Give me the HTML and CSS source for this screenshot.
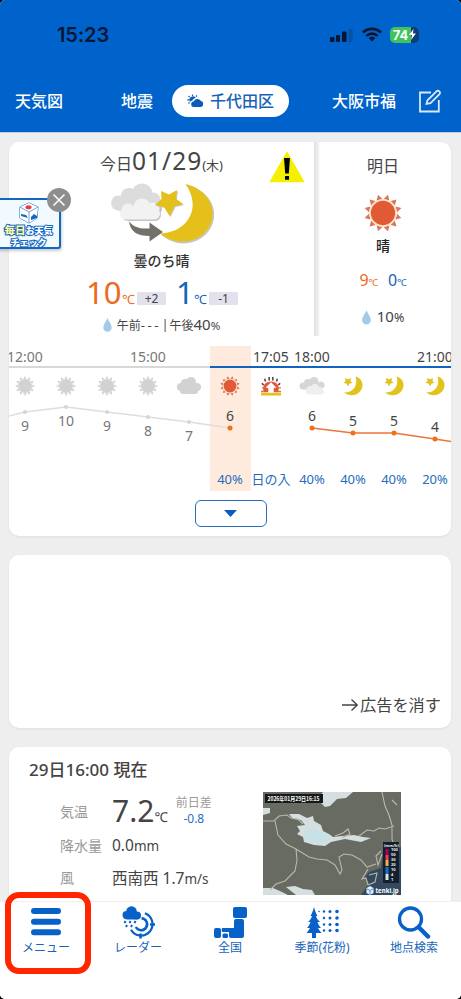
FILE: index.html
```html
<!DOCTYPE html>
<html lang="ja">
<head>
<meta charset="utf-8">
<title>千代田区の天気</title>
<link rel="stylesheet" href="styles.css">
</head>
<body>
<svg class="defs" width="0" height="0">
  <defs>
    <g id="rays">
      <path id="ray" d="M-3.2-14.5 0-20 3.2-14.5Z"/>
      <use href="#ray" transform="rotate(30)"/><use href="#ray" transform="rotate(60)"/><use href="#ray" transform="rotate(90)"/><use href="#ray" transform="rotate(120)"/><use href="#ray" transform="rotate(150)"/><use href="#ray" transform="rotate(180)"/><use href="#ray" transform="rotate(210)"/><use href="#ray" transform="rotate(240)"/><use href="#ray" transform="rotate(270)"/><use href="#ray" transform="rotate(300)"/><use href="#ray" transform="rotate(330)"/>
    </g>
    <symbol id="sun" viewBox="-20 -20 40 40"><g transform="rotate(15)"><use href="#rays" fill="#d8765f"/></g><circle r="14.500" fill="#fbe3c4"/><circle r="12.800" fill="#e05a35"/></symbol>
    <symbol id="sun-past" viewBox="-20 -20 40 40"><use href="#rays" fill="#d2d2d2"/><circle r="14" fill="#d2d2d2"/></symbol>
    <symbol id="cloud-past" viewBox="0 0 26 20"><g fill="#d2d2d2"><circle cx="5" cy="11" r="4"/><circle cx="9" cy="7" r="4"/><circle cx="15" cy="6" r="5"/><circle cx="21" cy="11" r="4"/><rect x="4" y="9" width="18" height="9" rx="3"/></g></symbol>
    <symbol id="cloud" viewBox="0 0 26 20"><g fill="#d6d6d6"><circle cx="4" cy="10" r="3.500"/><circle cx="9" cy="7" r="4"/><circle cx="15" cy="5.500" r="4.500"/><circle cx="22" cy="9" r="3.500"/><rect x="3" y="8" width="21" height="5.500" rx="2"/></g><g fill="#efefef"><circle cx="11" cy="13.500" r="3.500"/><circle cx="16" cy="12" r="4"/><circle cx="21" cy="14" r="3"/><rect x="7" y="13" width="18" height="5.500" rx="2.700"/></g></symbol>
    <symbol id="moon" viewBox="0 0 20 20"><path fill="#e2c21c" d="M12.500.500c7 2 9 9 5 14.500-4 5.500-12.500 5-16.500 1.500 8.500.5 14.500-6.500 11.500-16Z"/><path fill="#e2c21c" d="m2 2 3 1.200L8 2l-.5 3L9.500 7l-3 .6L5 10.500 3.500 7.600.5 7l2-2Z"/></symbol>
    <symbol id="drop" viewBox="0 0 10 16"><path fill="#a3cbe8" d="M5 0c1.500 4 4.800 7 4.800 11A4.800 4.800 0 0 1 .2 11C.2 7 3.500 4 5 0Z"/></symbol>
  </defs>
</svg>
<div class="screen">
  <header class="header">
    <div class="status">
      <span class="clock">15:23</span>
      <span class="status-icons">
        <svg width="24" height="16" viewBox="0 0 24 16"><g fill="#061733"><rect y="10" width="4.500" height="5" rx="1"/><rect x="6" y="8" width="4" height="7" rx="1"/><rect x="12" y="4.500" width="4.500" height="10.500" rx="1"/></g><rect x="18.500" y="2" width="4" height="13" rx="1" fill="#0751a8"/></svg>
        <svg width="20" height="15" viewBox="0 0 20 15"><g fill="none" stroke="#061733" stroke-width="2.600"><path d="M1 5.500a13 13 0 0 1 18 0M4.300 8.900a8.200 8.200 0 0 1 11.400 0"/></g><path fill="#061733" d="M10 14.500 6.600 11a5 5 0 0 1 6.800 0Z"/></svg>
        <span class="battery">74<svg width="7" height="11" viewBox="0 0 7 11"><path fill="#fff" d="M4.500 0 0 6h3L2 11l5-6.500H4Z"/></svg></span>
      </span>
    </div>
    <nav class="tabs">
      <span class="tab tab-map">天気図</span>
      <span class="tab tab-quake">地震</span>
      <span class="tab tab-active">
        <svg width="17" height="14" viewBox="0 0 17 14"><path fill="#0a5cb8" d="M7 13a2.700 2.700 0 0 1-.3-5.400 4 4 0 0 1 7-.8A3.200 3.200 0 0 1 14 13Z"/><path fill="#0a5cb8" d="M3 8a3.500 3.500 0 0 1 6-4C7 4.200 6 5 5.500 6.500 4 6.800 3.500 7.400 3 8Z"/><path stroke="#0a5cb8" stroke-width="1.200" d="M5.500 2V.5M2.700 3 1.500 1.800M9 2.500l1-1M2 5.800H.3M2.500 8.500l-1 1"/></svg>
        <span>千代田区</span>
      </span>
      <span class="tab tab-osaka">大阪市福</span>
      <svg class="edit" width="24" height="24" viewBox="0 0 24 24" fill="none" stroke="#d7e9fb" stroke-width="1.800"><path d="M13 3.500H2v19h18.800V11"/><path d="m8.500 14.800 1-3.500 9-9q1.500-1.200 2.800 0t.2 2.800l-9 9Z"/></svg>
    </nav>
  </header>

  <main class="content">
    <section class="card forecast">
      <div class="days">
        <div class="today">
          <svg class="warning" width="36" height="32" viewBox="0 0 36 32"><path d="M18 1.500 34.500 30.500h-33Z" fill="#f5f000" stroke="#f5f000" stroke-width="1.500" stroke-linejoin="round"/><path d="M15 7h6l-1.200 15.500h-3.600ZM16 25h4v3.700h-4Z"/></svg>
          <h1 class="date">今日<b>01/29</b><small>(木)</small></h1>
          <svg class="today-icon" width="104" height="62" viewBox="0 0 104 62">
            <g fill="#dcdcdc"><circle cx="8.500" cy="20" r="7.500"/><circle cx="19" cy="13" r="8"/><circle cx="32" cy="11" r="10.500"/><circle cx="43" cy="17" r="7.500"/><rect x="5" y="17" width="44" height="11" rx="5"/></g>
            <g fill="#c4c4c4"><rect x="12" y="26" width="39" height="12" rx="6"/><circle cx="46" cy="26" r="6"/></g>
            <g fill="#f2f2f2"><circle cx="18" cy="27" r="6.500"/><circle cx="32" cy="24" r="8.500"/><circle cx="43" cy="26" r="6.500"/><rect x="10" y="25" width="40" height="11.500" rx="5.700"/></g>
            <path fill="#c9c5b0" d="M77 2c19 4 32 21 25.500 39C95 61 69 67 51.500 52 77 52 95 28 77 2Z"/>
            <path fill="#e5bf1a" d="M75.500 1C94 5 107 22 101 39.500 94 59 68 65 50 50.500 76 50 93 26 75.500 1Z"/>
            <path fill="#c9c5b0" d="m52 9 8 3.500 8-4.500-1.300 8.500 7.300 5.500-8.500 2-5 10-5.500-9-9-2 6.500-6Z"/>
            <path fill="#e5bf1a" d="m51 8 8 3.500L67 7l-1.300 8.500L73 21l-8.500 2-5 10-5.500-9-9-2 6.500-6Z"/>
            <path fill="#74716a" d="M19 38c4 6 10 8 20.500 7.500v-6L53 49l-13.500 9.500v-5.500C28 53 20 49 19 38Z"/>
          </svg>
          <p class="summary">曇のち晴</p>
          <div class="temps">
            <span class="hot">10</span><span class="unit hot-unit">℃</span><span class="delta">+2</span>
            <span class="cold">1</span><span class="unit cold-unit">℃</span><span class="delta">-1</span>
          </div>
          <div class="rain"><svg width="9" height="14"><use href="#drop"/></svg><span>午前<i>---</i></span><em>|</em><span>午後<b>40</b><small>%</small></span></div>
        </div>
        <div class="divider"></div>
        <div class="tomorrow">
          <h2>明日</h2>
          <svg class="tomorrow-sun" width="38" height="38"><use href="#sun"/></svg>
          <p>晴</p>
          <div class="tomorrow-temps"><span class="hot-small">9<small>℃</small></span><span class="cold-small">0<small>℃</small></span></div>
          <div class="tomorrow-rain"><svg width="9" height="15"><use href="#drop"/></svg><span>10<small>%</small></span></div>
        </div>
      </div>

      <div class="hourly">
        <div class="hours">
          <div class="hour past"><time>12:00</time><svg><use href="#sun-past"/></svg></div>
          <div class="hour past"><time></time><svg><use href="#sun-past"/></svg></div>
          <div class="hour past"><time></time><svg><use href="#sun-past"/></svg></div>
          <div class="hour past"><time>15:00</time><svg><use href="#sun-past"/></svg></div>
          <div class="hour past"><time></time><svg class="wide"><use href="#cloud-past"/></svg></div>
          <div class="hour now"><time></time><svg><use href="#sun"/></svg><span>40%</span></div>
          <div class="hour"><time>17:05</time><svg class="wide" viewBox="0 0 26 22"><path d="m5 10-2-2m4-2L6 3m5 2V1m4 4V1m4 5 1-3m1 7 2-2" stroke="#604550" stroke-width="1.800"/><path d="M3 13h4M5 17H2M20 13h4M21 17h3" stroke="#e06d43" stroke-width="1.500"/><path fill="#e05a35" d="M5 18C3 10 7 6 13 6s10 4 8 12h-5v-5h3l-6-6-6 6h3v5Z"/><path fill="#fff" d="M11 18v-5H8l5-5 5 5h-3v5Z"/><rect x="2" y="18.500" width="22" height="3" fill="#e2c21c"/></svg><span>日の入</span></div>
          <div class="hour"><time>18:00</time><svg class="wide"><use href="#cloud"/></svg><span>40%</span></div>
          <div class="hour"><time></time><svg><use href="#moon"/></svg><span>40%</span></div>
          <div class="hour"><time></time><svg><use href="#moon"/></svg><span>40%</span></div>
          <div class="hour"><time>21:00</time><svg><use href="#moon"/></svg><span>20%</span></div>
        </div>
        <svg class="graph" width="442" height="60" viewBox="9 400 442 60">
          <path d="M9 416 25 412 66 407 107 412 148 417 189 422 230 428" fill="none" stroke="#dedede" stroke-width="1.300"/>
          <g fill="#d5d5d5"><circle cx="25" cy="412" r="2"/><circle cx="66" cy="407" r="2"/><circle cx="107" cy="412" r="2"/><circle cx="148" cy="417" r="2"/><circle cx="189" cy="422" r="2"/></g>
          <path d="m312 428 41 5h41l41 6 16 2.500" fill="none" stroke="#ed743d" stroke-width="1.500"/>
          <g fill="#f36f16"><circle cx="230" cy="428" r="2.500"/><circle cx="312" cy="428" r="2.500"/><circle cx="353" cy="433" r="2.500"/><circle cx="394" cy="433" r="2.500"/><circle cx="435" cy="439" r="2.500"/></g>
          <g class="past-values"><text x="25" y="430.500">9</text><text x="66" y="425.500">10</text><text x="107" y="430.500">9</text><text x="148" y="436">8</text><text x="189" y="441">7</text></g>
          <g class="values"><text x="230" y="421">6</text><text x="312" y="421">6</text><text x="353" y="426">5</text><text x="394" y="426">5</text><text x="435" y="432">4</text></g>
        </svg>
      </div>
      <button class="expand" aria-label="開く"><svg width="13" height="7" viewBox="0 0 13 7"><path d="M0 0h13L6.500 7Z" fill="#0b5bc4"/></svg></button>
    </section>

    <section class="card ad"><span class="ad-link"><svg width="17" height="14" viewBox="0 0 17 14" fill="none" stroke="#444" stroke-width="1.400"><path d="M0 7h15M9.500 1.500 15.200 7l-5.700 5.500"/></svg>広告を消す</span></section>

    <section class="card current">
      <h2>29日16:00 現在</h2>
      <div class="current-body">
        <dl>
          <div class="row row-temp"><dt>気温</dt><dd><b>7.2</b><small>℃</small></dd><dd class="diff">前日差<span>-0.8</span></dd></div>
          <div class="row"><dt>降水量</dt><dd>0.0<small>mm</small></dd></div>
          <div class="row row-wind"><dt>風</dt><dd>西南西 1.7<small>m/s</small></dd></div>
        </dl>
        <svg class="radar" width="138" height="103" viewBox="0 0 138 103">
          <rect width="138" height="103" fill="#686b61"/>
          <path fill="#34495d" d="M138 55l-6 2-12 3-2 16-12 4-4 5 4 6-8 12h40Z"/>
          <path fill="#d5dfdf" d="M60 0h30l-7 6-9 1-7 7-5 1-4-4-3-5ZM0 16l7 0v5l-7 2ZM26 22l10 0 8 4 6-2 1 5 7 4 2 6 6 3 4 3 9-1 12-1 9 2 8 1-10 4-16-3-14 3-6 4-11-1-10-3-1-5-6-3 3-3-3-5 8-1-4-5-8-1ZM0 96l10 0 9 4 6 3H0ZM23 95l9-1 8 3 9 1 3 5H33Z"/>
          <path fill="#c6e1e8" d="M43 38h12l13 8-10 5-17-5Z"/>
          <g fill="none" stroke="#b9b9ad" stroke-width="1.100"><path d="M0 29h11l5-5 8-1 4 3 7 1 5 5M12 29l3 14 8 9 10 5 13 8 8 2 10 1 8 5 5 9 2-4-3-13 5-3 8 1 9 5 6 7 9-3M33 57l1 11-2 11-10 10-9 3-6 6M72 44l8-3 5-4 2 5-8 4m17-2 8-6 7 1 5-3 6 1 9-3M119 0l3 14 4 9 3 10v14l3 10M129 8l5 5M118 59l-5 5 2 9 4-11M105 77l-6 10 4-1 2 7 7-3 2-9-8 2"/></g>
          <rect x="2" y="2" width="58" height="9" fill="#151919"/><text class="radar-date" x="4.500" y="9" textLength="52" lengthAdjust="spacingAndGlyphs">2026年01月29日16:15</text>
          <rect x="120" y="50" width="16" height="41" fill="#12202e"/><text class="legend" x="121" y="54.500">(mm/h)</text>
          <path stroke-width="3" stroke="#b50057" d="M124 57v6"/><path stroke-width="3" stroke="#f13b62" d="M124 63v5"/><path stroke-width="3" stroke="#f0b045" d="M124 68v6"/><path stroke-width="3" stroke="#1973cc" d="M124 75v7"/><path stroke-width="3" stroke="#d1e4e8" d="M124 82v6"/>
          <g class="legend"><text x="128" y="59">100</text><text x="128" y="64">50</text><text x="128" y="69">30</text><text x="128" y="74">20</text><text x="128" y="79">10</text><text x="128" y="84">4</text><text x="128" y="89">1</text></g>
          <path fill="#d9edff" d="m107 94 3.500 2v5l-3.500 2-3.500-2v-5Z"/><path stroke="#3475b8" stroke-width=".8" fill="none" d="m104 97 3 1.500 3-1.500M107 99v4"/><text class="radar-logo" x="112.500" y="100.500" textLength="23" lengthAdjust="spacingAndGlyphs">tenki.jp</text>
        </svg>
      </div>
    </section>
  </main>

  <footer class="bottom-nav">
    <div class="nav-item"><svg width="34" height="34" viewBox="0 0 34 34"><path d="M5 5h24M5 15.700h24M5 26.300h24" stroke="#0761c8" stroke-width="6" stroke-linecap="round"/></svg><span>メニュー</span></div>
    <div class="nav-item"><svg width="34" height="34" viewBox="0 0 34 34"><g fill="#0761c8"><circle cx="5.500" cy="9" r="4"/><circle cx="10.500" cy="5.500" r="5.300"/><circle cx="16" cy="9.500" r="4"/><rect x="3" y="7" width="15" height="6.500" rx="3"/></g><g fill="none" stroke="#0761c8" stroke-width="2.200"><path d="M23.900 7.200A11.500 11.500 0 1 1 10 23.700"/><path stroke-width="2.600" d="M20.500 12.200A6 6 0 1 1 14.800 21M29 18.500h5M19.500 27.500v5"/></g><path stroke="#0761c8" stroke-width="2" d="m4.500 15-1 2m6-2-1 2m6-2-1 2M6 19l-1 2m6-2-1 2"/></svg><span>レーダー</span></div>
    <div class="nav-item"><svg width="34" height="34" viewBox="0 0 34 34"><g fill="#0761c8"><rect x="20" y="1" width="14" height="11" rx="2"/><path d="M23 13h6q2 0 2 2v15q0 2-2 2H18q-2 0-2-2v-4h-6q-2 0-1-4h12v-7q0-2 2-2Z"/><rect x="1" y="22" width="7" height="10" rx="2"/><rect x="9.500" y="27.500" width="5.500" height="4.500" rx="1.500"/></g></svg><span>全国</span></div>
    <div class="nav-item"><svg width="34" height="34" viewBox="0 0 34 34"><path fill="#0761c8" d="M9 1c1 4 2 6 3.500 9H11c1 3 2 4 4 6h-2.500c1 3 2 4 3.500 6h-3c1 2 2 3 3.500 5H11v5H7v-5H1.500C3 25 4 24 5 22H2c1.500-2 2.500-3 3.500-6H3c2-2 3-3 4-6H5.500C7 7 8 5 9 1Z"/><g fill="#0761c8"><circle cx="14" cy="5.500" r=".8"/><circle cx="19" cy="5.500" r="1.200"/><circle cx="25" cy="5.500" r="1.500"/><circle cx="32" cy="5.500" r="1.800"/><circle cx="19" cy="12" r="1.200"/><circle cx="25" cy="12" r="1.500"/><circle cx="32" cy="12" r="1.800"/><circle cx="19" cy="18.500" r="1.200"/><circle cx="25" cy="18.500" r="1.500"/><circle cx="32" cy="18.500" r="1.800"/><circle cx="19" cy="24.500" r="1.200"/><circle cx="25" cy="24.500" r="1.500"/><circle cx="32" cy="24.500" r="1.800"/></g></svg><span>季節(花粉)</span></div>
    <div class="nav-item"><svg width="34" height="34" viewBox="0 0 34 34" fill="none" stroke="#0761c8"><circle cx="13.500" cy="13" r="11" stroke-width="3.300"/><path d="m22 21.500 9 9" stroke-width="4.500" stroke-linecap="round"/></svg><span>地点検索</span></div>
  </footer>

  <aside class="promo">
    <svg width="22" height="22" viewBox="0 0 22 22"><path d="m11 1 9 4-1 11-8 5-9-5V5Z" fill="#fff" stroke="#1768be" stroke-width="1"/><path d="m2 5 9 5 9-5M11 10v11" fill="none" stroke="#72a7dc"/><ellipse cx="10.500" cy="5.200" rx="3" ry="2" fill="#e73c45"/><path fill="#1768be" d="m3 12 5 1 2 3-7-2ZM13 18v-3l3-3 3 2v2Z"/></svg>
    <p class="promo-title"><b>毎日</b>お天気</p><p>チェック</p>
    <span class="close"><svg width="12" height="12" viewBox="0 0 12 12"><path d="m.500.500 11 11M11.500.500l-11 11" stroke="#fff" stroke-width="1.500"/></svg></span>
  </aside>
  <div class="highlight"></div>
</div>
</body>
</html>
```
FILE: styles.css
```css
* { box-sizing: border-box; margin: 0; padding: 0; }
body { background: #000; font-family: "Noto Sans", "Noto Sans CJK JP", sans-serif; color: #444; }
svg { display: block; flex: none; }
.defs { position: absolute; }
i, em { font-style: normal; }
b { font-weight: 400; }
.screen { position: relative; width: 461px; height: 999px; overflow: hidden; background: #eee; border-radius: 5px; display: flex; flex-direction: column; }
.header { height: 133px; flex: none; background: #0063cb; border-bottom: 1px solid #b7d0ea; }
.status { height: 69px; padding: 0 42px 0 57px; display: flex; align-items: center; justify-content: space-between; }
.clock { font: 600 20px/24px Inter, sans-serif; color: #061733; letter-spacing: -.1px; }
.status-icons { display: flex; align-items: center; gap: 8px; }
.battery { width: 29px; height: 16px; border-radius: 5px; display: flex; align-items: center; justify-content: center; gap: 1px; color: #fff; font: 700 13px/16px Inter, sans-serif; background: linear-gradient(90deg, #3fc45c 74%, #123c77 74%); }
.tabs { display: flex; align-items: center; height: 63px; color: #fff; font-size: 16px; font-weight: 500; line-height: 24px; white-space: nowrap; }
.tab-map { margin-left: 15px; width: 106px; }
.tab-quake { width: 51px; }
.tab-active { width: 117px; height: 32px; border-radius: 16px; background: #fff; color: #1563b8; display: flex; align-items: center; padding-left: 15px; gap: 6px; }
.tab-osaka { margin-left: 43px; width: 86px; }
.content { flex: 1; min-height: 0; overflow: hidden; padding: 9px 10px 0 9px; }
.card { background: #fff; border-radius: 10px; box-shadow: 0 1px 3px #0001; overflow: hidden; }
.forecast { height: 394px; }
.days { display: flex; height: 194px; }
.today { width: 305px; position: relative; display: flex; flex-direction: column; align-items: center; }
.warning { position: absolute; left: 260px; top: 9px; }
.date { height: 39px; display: flex; align-items: baseline; font-size: 16px; font-weight: 400; line-height: 37px; white-space: nowrap; }
.date b { font-size: 24.5px; letter-spacing: 1px; }
.date small { font-size: 13px; }
.today-icon { margin-top: 2px; }
.summary { font-size: 14px; line-height: 20px; font-weight: 500; margin-top: 6px; color: #333; }
.temps { height: 35px; margin-top: 5px; padding-left: 1px; display: flex; align-items: flex-end; }
.temps > span { line-height: 32px; }
.hot { color: #ed6a20; font-size: 31px; width: 36px; }
.cold { color: #1762bd; font-size: 31px; margin-left: 10px; width: 18px; }
.temps .unit { font-size: 13px; line-height: 18px; width: 14px; }
.hot-unit, .hot-small { color: #ed6a20; }
.cold-unit, .cold-small { color: #1762bd; }
.temps .delta { width: 29px; height: 13px; line-height: 13px; background: #e2e1ec; font-size: 12px; text-align: center; margin: 0 0 3px 1px; }
.rain { display: flex; align-items: center; gap: 5px; height: 22px; margin-top: 6px; font-size: 12px; white-space: nowrap; line-height: 20px; }
.rain i { font-size: 13px; letter-spacing: 2.5px; }
.rain em { margin: 0 -4px; }
.rain b { font-size: 15px; }
.rain small { font-size: 11.5px; }
.divider { width: 6px; background: linear-gradient(90deg, #ddd, #eee 45%, #e8e8e8 55%, #fff); }
.tomorrow { flex: 1; display: flex; flex-direction: column; align-items: center; padding-right: 5px; }
.tomorrow h2 { font-size: 16px; font-weight: 400; line-height: 24px; margin-top: 12px; }
.tomorrow-sun { margin-top: 16px; }
.tomorrow p { font-size: 14px; font-weight: 500; line-height: 20px; margin-top: 4px; color: #222; }
.tomorrow-temps { display: flex; gap: 10px; font-size: 16px; line-height: 22px; margin-top: 13px; }
.tomorrow-temps small { font-size: 9.5px; }
.tomorrow-rain { display: flex; align-items: center; gap: 6px; font-size: 15px; line-height: 22px; margin-top: 11px; }
.tomorrow-rain small { font-size: 12.5px; }
.hourly { height: 145px; margin-top: 10px; position: relative; overflow: hidden; }
.hours { display: grid; grid-template-columns: repeat(11, 41px); margin-left: -4.5px; }
.hour { height: 145px; display: flex; flex-direction: column; align-items: center; font-size: 14px; white-space: nowrap; }
.hour time { width: 41px; height: 22px; line-height: 21px; border-bottom: 2px solid #1263bd; display: flex; justify-content: center; flex: none; }
.hour.past time { border-color: #d8d8d8; color: #777; }
.hour > svg { width: 20px; height: 20px; margin-top: 8px; }
.hour > svg.wide { width: 26px; }
.hour span { margin-top: 73px; line-height: 20px; color: #286dbb; font-size: 13px; }
.hour.now { background: #ffebdd; }
.graph { position: absolute; left: 0; top: 54px; }
.graph text { text-anchor: middle; font-size: 14px; }
.past-values { fill: #777; }
.values { fill: #444; }
.expand { display: flex; align-items: center; justify-content: center; width: 72px; height: 27px; margin: 9px 0 0 185.5px; border: 1px solid #286dbd; border-radius: 6px; background: #fff; }
.ad { height: 173px; margin-top: 19px; display: flex; align-items: flex-end; justify-content: flex-end; padding: 0 10px 11px; }
.ad-link { display: flex; align-items: center; gap: 1px; font-size: 16.2px; line-height: 24px; }
.current { height: 175px; margin-top: 19px; padding: 10px 20px 0 20px; }
.current h2 { font-size: 17px; font-weight: 500; line-height: 26px; }
.current-body { display: flex; justify-content: space-between; padding: 9px 30px 0 31px; }
.row { display: flex; align-items: center; height: 32px; font-size: 14px; white-space: nowrap; }
.row-temp { height: 37px; }
.row dt { width: 52px; color: #999; }
.row dd { font-size: 15.5px; }
.row dd b { font-size: 30px; line-height: 36px; }
.row dd small { font-size: 13.5px; }
.row dd.diff { font-size: 12px; line-height: 16px; color: #999; text-align: center; margin-left: 8px; }
.diff span { display: block; color: #286fc0; }
.radar-date { font: 700 5.5px "Noto Sans CJK JP"; fill: #fff; }
.legend { font: 700 4px "Noto Sans"; fill: #eee; }
.radar-logo { font: 700 7px "Noto Sans"; fill: #fff; }
.bottom-nav { height: 98px; flex: none; background: #fff; border-top: 1px solid #f2efec; display: grid; grid-template-columns: repeat(5, 92px); padding-top: 4px; }
.nav-item { display: flex; flex-direction: column; align-items: center; color: #1763b7; font-size: 12px; line-height: 16px; white-space: nowrap; }
.promo { position: absolute; left: -4px; top: 198px; width: 65px; height: 51px; background: #f3faff; border: 2px solid #1267c2; border-radius: 3px; box-shadow: 1px 2px 3px #0003; display: flex; flex-direction: column; align-items: center; padding-top: 2px; font-weight: 900; font-size: 9px; line-height: 11px; color: #fff; -webkit-text-stroke: 2px #1267c2; paint-order: stroke fill; white-space: nowrap; }
.promo-title { line-height: 12px; }
.promo b { color: #fff7a2; font-size: 10.5px; font-weight: 900; }
.close { position: absolute; left: 49px; top: -12px; width: 24px; height: 24px; border-radius: 50%; background: #8e8e8e; display: grid; place-items: center; }
.highlight { position: absolute; left: 5px; top: 892px; width: 86px; height: 82px; border: 6px solid #ff2600; border-radius: 14px; }
```
